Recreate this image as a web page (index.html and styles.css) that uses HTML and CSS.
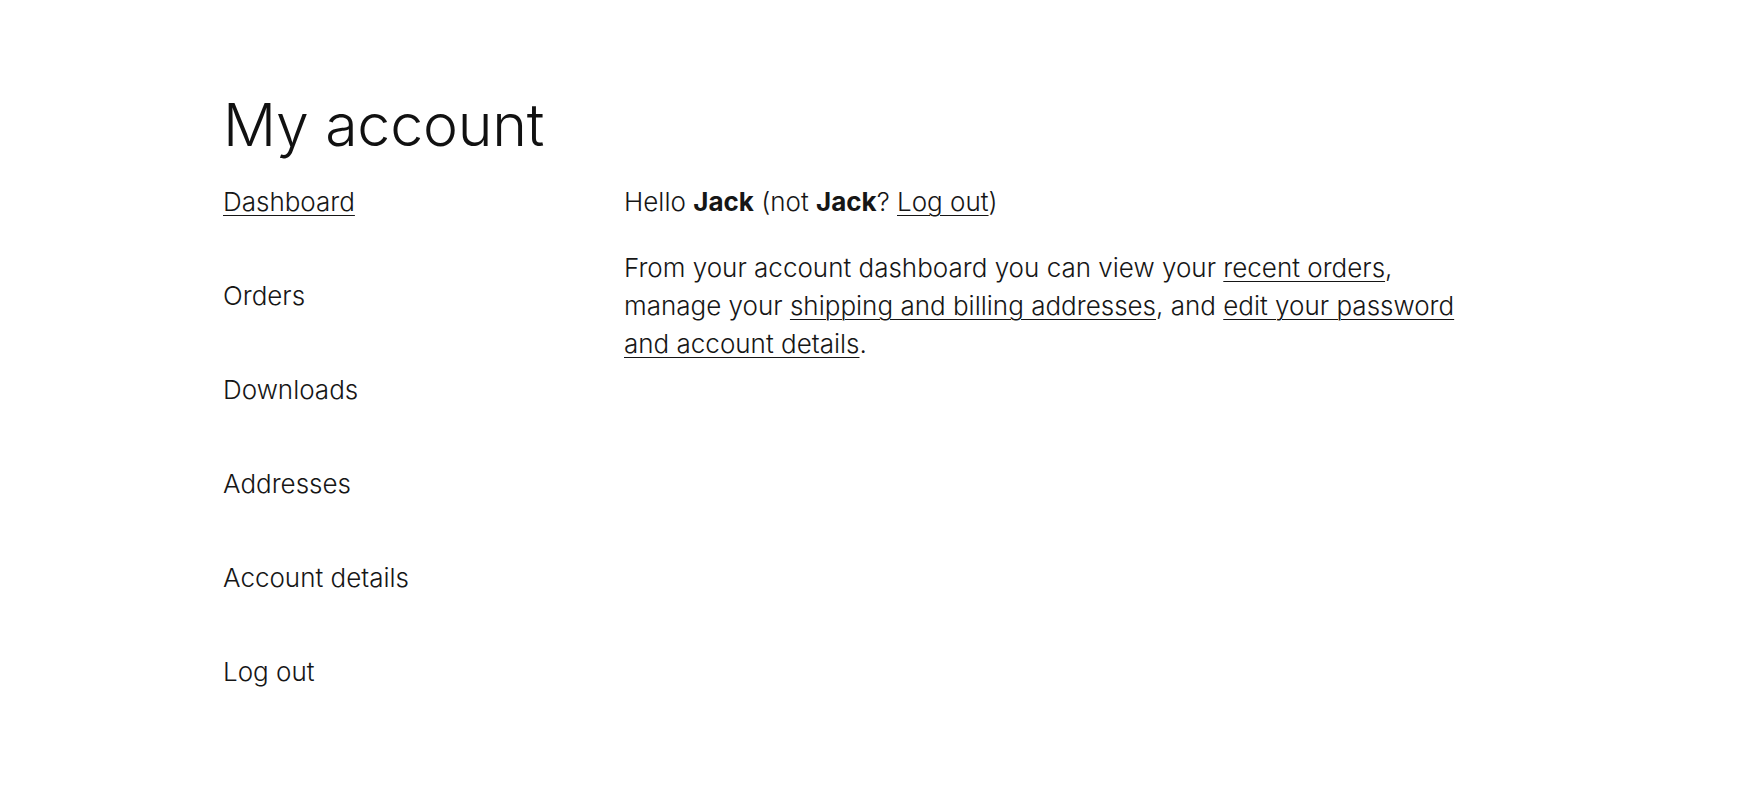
FILE: index.html
```html
<!DOCTYPE html>
<html lang="en">
<head>
<meta charset="utf-8">
<title>My account</title>
<link rel="stylesheet" href="styles.css">
</head>
<body>
<main class="page">
  <h1 class="page-title">My account</h1>
  <div class="account">
    <nav class="account-nav">
      <ul>
        <li><a href="#" class="active">Dashboard</a></li>
        <li><a href="#">Orders</a></li>
        <li><a href="#">Downloads</a></li>
        <li><a href="#">Addresses</a></li>
        <li><a href="#">Account details</a></li>
        <li><a href="#">Log out</a></li>
      </ul>
    </nav>
    <div class="account-content">
      <p class="hello">Hello <strong>Jack</strong> (not <strong>Jack</strong>? <a href="#" class="link">Log out</a>)</p>
      <p class="intro">From your account dashboard you can view your <a href="#" class="link">recent orders</a>, manage your <a href="#" class="link">shipping and billing addresses</a>, and <a href="#" class="link">edit your password and account details</a>.</p>
    </div>
  </div>
</main>
</body>
</html>
```
FILE: styles.css
```css
html, body {
  margin: 0;
  padding: 0;
  background: #ffffff;
}
body {
  font-family: Inter, "Noto Sans", "Liberation Sans", sans-serif;
  color: #161616;
  font-size: 26px;
  font-weight: 300;
  line-height: 38px;
}
.page {
  width: 1296px;
  margin: 0 auto;
  padding-top: 89px;
  box-sizing: border-box;
}
.page-title {
  margin: 0 0 23px 0;
  font-size: 59px;
  line-height: 71px;
  font-weight: 300;
  letter-spacing: -0.2px;
  color: #111;
}
.account {
  display: flex;
  align-items: flex-start;
}
.account-nav {
  width: 401px;
  flex: 0 0 401px;
}
.account-nav ul {
  list-style: none;
  margin: 0;
  padding: 0;
  display: flex;
  flex-direction: column;
  gap: 56px;
}
.account-nav a {
  color: #161616;
  text-decoration: none;
}
.account-nav a.active {
  text-decoration: underline;
  text-decoration-thickness: 1px;
  text-underline-offset: 4px;
}
.account-content {
  width: 852px;
}
.account-content p {
  margin: 0;
}
.hello {
  margin-bottom: 28px !important;
}
.hello strong {
  font-weight: 700;
}
.link {
  color: #161616;
  text-decoration: underline;
  text-decoration-thickness: 1px;
  text-underline-offset: 4px;
}
```
